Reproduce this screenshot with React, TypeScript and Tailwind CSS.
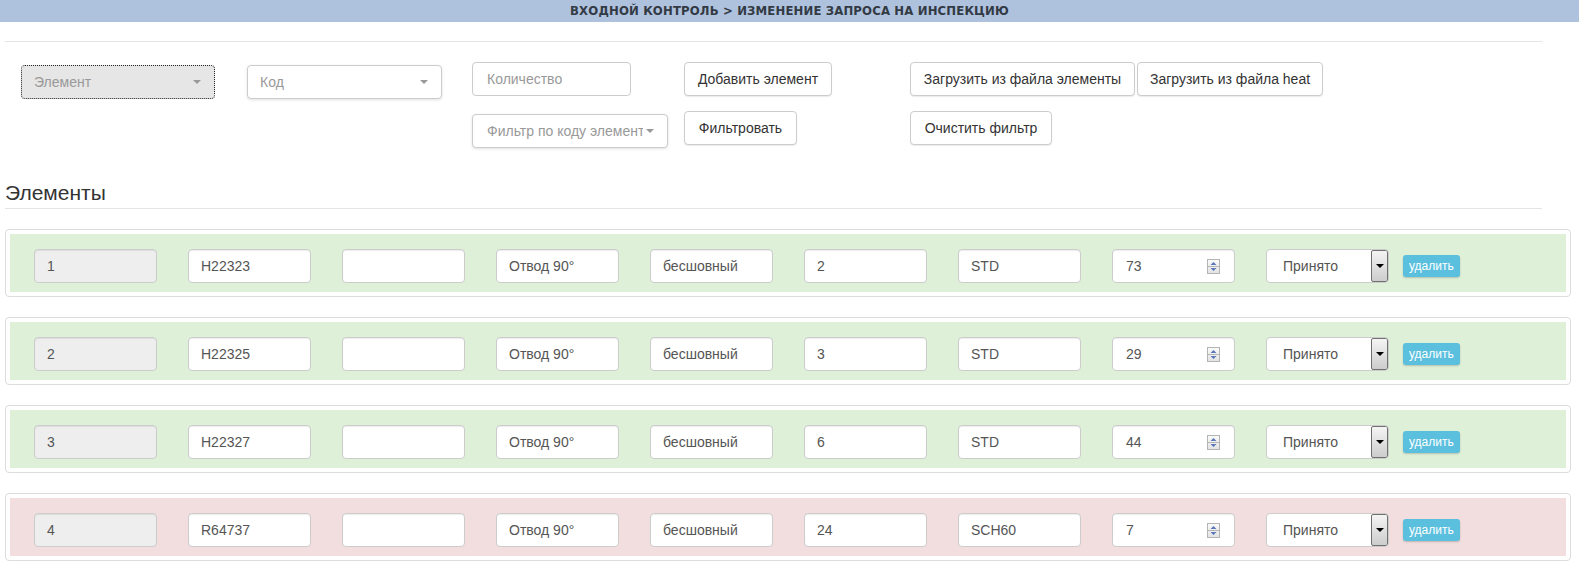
import React from 'react';

type Item = {
  no: number;
  heat: string;
  spec: string;
  kind: string;
  type: string;
  size: string;
  sch: string;
  qty: number;
  status: string;
  ok: boolean;
};

const items: Item[] = [
  { no: 1, heat: 'H22323', spec: '', kind: 'Отвод 90°', type: 'бесшовный', size: '2', sch: 'STD', qty: 73, status: 'Принято', ok: true },
  { no: 2, heat: 'H22325', spec: '', kind: 'Отвод 90°', type: 'бесшовный', size: '3', sch: 'STD', qty: 29, status: 'Принято', ok: true },
  { no: 3, heat: 'H22327', spec: '', kind: 'Отвод 90°', type: 'бесшовный', size: '6', sch: 'STD', qty: 44, status: 'Принято', ok: true },
  { no: 4, heat: 'R64737', spec: '', kind: 'Отвод 90°', type: 'бесшовный', size: '24', sch: 'SCH60', qty: 7, status: 'Принято', ok: false },
];

const field =
  'h-[34px] w-[123px] shrink-0 rounded-[4px] border border-[#ccc] flex items-center pl-[12px] text-[14px] text-[#555] shadow-[inset_0_1px_1px_rgba(0,0,0,0.075)]';

const btn =
  'h-[34px] shrink-0 whitespace-nowrap rounded-[4px] border border-[#ccc] bg-white px-[12px] text-[14px] text-[#333] shadow-[0_1px_1px_rgba(0,0,0,0.08)] flex items-center';

const Caret = () => (
  <span className="ml-auto mr-[13px] h-0 w-0 border-x-[4px] border-t-[4px] border-x-transparent border-t-[#999]" />
);

const Spinner = () => (
  <svg width="13" height="15" viewBox="0 0 13 15" className="ml-auto mr-[14px]">
    <defs>
      <linearGradient id="spin" x1="0" y1="0" x2="0" y2="1">
        <stop offset="0" stopColor="#fbfbfb" />
        <stop offset="1" stopColor="#e2e2e2" />
      </linearGradient>
    </defs>
    <rect x="0.5" y="0.5" width="12" height="14" fill="url(#spin)" stroke="#b4b4b4" />
    <line x1="0.5" y1="7.5" x2="12.5" y2="7.5" stroke="#b4b4b4" />
    <path d="M6.5 3 L9.5 6 L3.5 6 Z" fill="#5a77b8" />
    <path d="M3.5 9 L9.5 9 L6.5 12 Z" fill="#5a77b8" />
  </svg>
);

const ItemRow = ({ item }: { item: Item }) => (
  <div className="ml-[5px] w-[1566px] rounded-[4px] border border-[#ddd] p-[4px]">
    <div className={`flex items-center pl-[24px] pt-[15px] pb-[9px] ${item.ok ? 'bg-[#dff0d8]' : 'bg-[#f2dede]'}`}>
      <div className="flex gap-[31px]">
        <div className={`${field} bg-[#eee]`}>{item.no}</div>
        <div className={`${field} bg-white`}>{item.heat}</div>
        <div className={`${field} bg-white`}>{item.spec}</div>
        <div className={`${field} bg-white`}>{item.kind}</div>
        <div className={`${field} bg-white`}>{item.type}</div>
        <div className={`${field} bg-white`}>{item.size}</div>
        <div className={`${field} bg-white`}>{item.sch}</div>
        <div className={`${field} bg-white pl-[13px]`}>
          {item.qty}
          <Spinner />
        </div>
        <div className="flex h-[34px] w-[123px] shrink-0 items-stretch overflow-hidden rounded-[4px] border border-[#ccc] bg-white text-[14px] text-[#555]">
          <span className="flex flex-1 items-center pl-[16px]">{item.status}</span>
          <span className="flex w-[17px] items-center justify-center rounded-[2px] border border-[#707070] bg-gradient-to-b from-[#f4f4f4] to-[#cdcdcd]">
            <span className="h-0 w-0 border-x-[4px] border-t-[4px] border-x-transparent border-t-black" />
          </span>
        </div>
      </div>
      <button className="ml-[14px] h-[22px] rounded-[3px] bg-[#5bc0de] px-[6px] text-[12px] text-white shadow-[0_1px_2px_rgba(0,0,0,0.2)]">
        удалить
      </button>
    </div>
  </div>
);

export default function App() {
  return (
    <div className="min-h-[571px] bg-white font-['Liberation_Sans',Arial,sans-serif]">
      {/* page title bar */}
      <div className="flex h-[22px] items-center justify-center bg-[#aec2de]">
        <span className="font-['Liberation_Sans_Narrow','DejaVu_Sans_Condensed',Roboto,sans-serif] text-[13px] font-bold tracking-[0.15px] text-[#333a44]">
          ВХОДНОЙ КОНТРОЛЬ &gt; ИЗМЕНЕНИЕ ЗАПРОСА НА ИНСПЕКЦИЮ
        </span>
      </div>
      <div className="ml-[5px] mt-[19px] h-px w-[1537px] bg-[#e5e5e5]" />

      {/* toolbar */}
      <div className="flex items-start pl-[21px] pt-[20px]">
        <div className="mt-[3px] flex h-[34px] w-[194px] items-center rounded-[4px] border border-dotted border-[#222] bg-[#e6e6e6] pl-[12px] text-[14px] text-[#999]">
          Элемент
          <Caret />
        </div>
        <div className="ml-[32px] mt-[3px] flex h-[34px] w-[195px] items-center rounded-[4px] border border-[#ccc] bg-white pl-[12px] text-[14px] text-[#999] shadow-[0_1px_3px_rgba(0,0,0,0.12)]">
          Код
          <Caret />
        </div>
        <div className="ml-[30px] flex flex-col">
          <div className="flex h-[34px] w-[159px] items-center rounded-[4px] border border-[#ccc] bg-white pl-[14px] text-[14px] text-[#999]">
            Количество
          </div>
          <div className="mt-[18px] flex h-[34px] w-[196px] items-center rounded-[4px] border border-[#ccc] bg-white pl-[14px] text-[14px] text-[#999] shadow-[0_1px_3px_rgba(0,0,0,0.12)]">
            <span className="w-[156px] overflow-hidden whitespace-nowrap">Фильтр по коду элемента</span>
            <Caret />
          </div>
        </div>
        <div className="ml-[16px] flex w-[148px] flex-col items-start gap-[15px]">
          <button className={`${btn} w-[148px] justify-center px-0`}>Добавить элемент</button>
          <button className={`${btn} w-[113px] justify-center px-0`}>Фильтровать</button>
        </div>
        <div className="ml-[78px] flex flex-col items-start gap-[15px]">
          <button className={`${btn} w-[225px] justify-center px-0`}>Загрузить из файла элементы</button>
          <button className={`${btn} w-[142px] justify-center px-0`}>Очистить фильтр</button>
        </div>
        <button className={`${btn} ml-[2px] w-[186px] justify-center px-0`}>Загрузить из файла heat</button>
      </div>

      {/* list heading */}
      <div className="ml-[5px] mt-[32px] w-[1537px] border-b border-[#e5e5e5] pb-[2px]">
        <h2 className="text-[21px] leading-[26px] text-[#333]">Элементы</h2>
      </div>

      {/* element rows */}
      <div className="mt-[20px] flex flex-col gap-[20px]">
        {items.map(item => (
          <ItemRow key={item.no} item={item} />
        ))}
      </div>
    </div>
  );
}
